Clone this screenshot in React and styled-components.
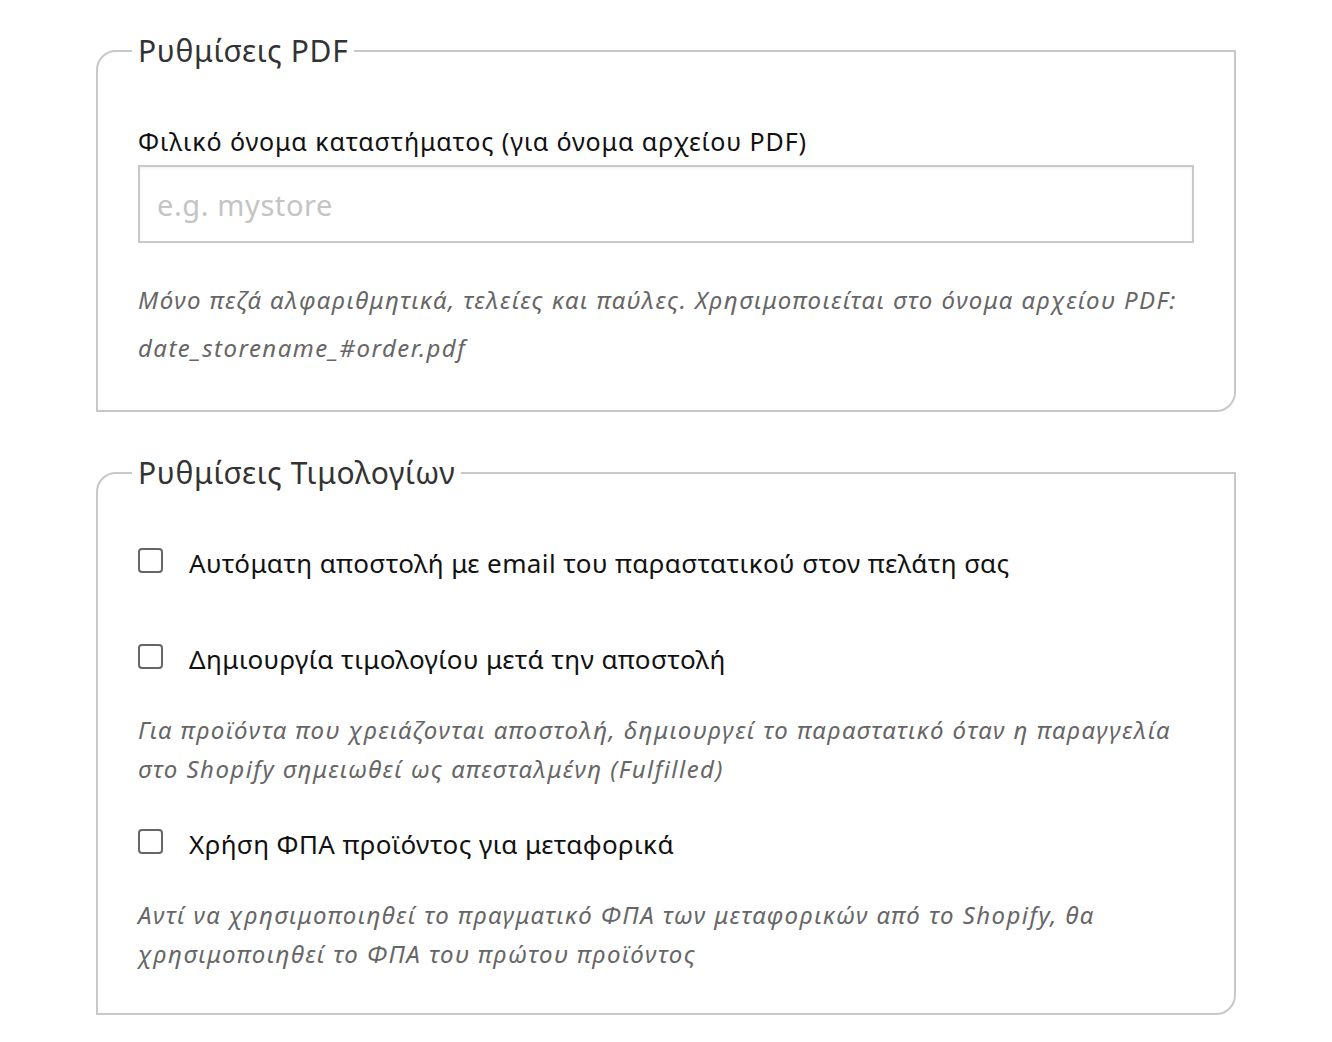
import styled, { createGlobalStyle } from 'styled-components';

const GlobalStyle = createGlobalStyle`
  body {
    margin: 0;
    background: #fff;
    font-family: "Noto Sans", "Open Sans", sans-serif;
    color: #111;
  }
  * { box-sizing: border-box; }
`;

const Page = styled.div`
  padding: 31px 0 40px 96px;
  width: 1236px;
`;

const Fieldset = styled.fieldset`
  margin: ${props => props.$gap || 0}px 0 0 0;
  width: 1140px;
  border: 2px solid #c8c8c8;
  border-radius: 20px 0 20px 0;
  padding: 0 40px ${props => props.$pb || 38}px;
  min-width: 0;
`;

const Legend = styled.legend`
  font-size: 30px;
  line-height: 40px;
  letter-spacing: 0.7px;
  padding: 0 6px;
  margin-left: -6px;
  color: #333;
`;

const Label = styled.label`
  display: block;
  margin-top: 54px;
  font-size: 25px;
  line-height: 32px;
  letter-spacing: 0.9px;
  color: #111;
`;

const Input = styled.input`
  display: block;
  width: 100%;
  height: 78px;
  margin-top: 8px;
  border: 2px solid #c8c8c8;
  box-shadow: inset 0 1px 3px rgba(0, 0, 0, 0.06);
  padding: 0 17px;
  font-family: inherit;
  font-size: 29px;
  letter-spacing: 0.6px;
  color: #333;
  outline: none;
  &::placeholder { color: #c4c4c4; }
`;

const Hint = styled.p`
  margin: ${props => props.$top}px 0 0;
  font-style: italic;
  font-size: 24px;
  letter-spacing: 1.45px;
  line-height: ${props => props.$lh}px;
  color: #666;
`;

const CheckRow = styled.label`
  display: flex;
  align-items: center;
  gap: 26px;
  margin-top: ${props => props.$top}px;
  font-size: 26px;
  line-height: 40px;
  letter-spacing: 0.4px;
  color: #111;
  cursor: pointer;
`;

const Box = styled.input.attrs({ type: 'checkbox' })`
  appearance: none;
  flex: none;
  width: 25px;
  height: 25px;
  margin: -5px 0 0;
  border: 2px solid #666;
  border-radius: 4px;
  background: #fff;
`;

export default function App() {
  return (
    <>
      <GlobalStyle />
      <Page>
        <Fieldset>
          <Legend>Ρυθμίσεις PDF</Legend>
          <Label htmlFor="storename">Φιλικό όνομα καταστήματος (για όνομα αρχείου PDF)</Label>
          <Input id="storename" placeholder="e.g. mystore" />
          <Hint $top={33} $lh={48}>
            Μόνο πεζά αλφαριθμητικά, τελείες και παύλες. Χρησιμοποιείται στο όνομα αρχείου PDF:
            date_storename_#order.pdf
          </Hint>
        </Fieldset>

        <Fieldset $gap={41} $pb={40}>
          <Legend>Ρυθμίσεις Τιμολογίων</Legend>
          <CheckRow $top={50}>
            <Box />
            Αυτόματη αποστολή με email του παραστατικού στον πελάτη σας
          </CheckRow>
          <CheckRow $top={56}>
            <Box />
            Δημιουργία τιμολογίου μετά την αποστολή
          </CheckRow>
          <Hint $top={31} $lh={39}>
            Για προϊόντα που χρειάζονται αποστολή, δημιουργεί το παραστατικό όταν η παραγγελία
            στο Shopify σημειωθεί ως απεσταλμένη (Fulfilled)
          </Hint>
          <CheckRow $top={36}>
            <Box />
            Χρήση ΦΠΑ προϊόντος για μεταφορικά
          </CheckRow>
          <Hint $top={31} $lh={39}>
            Αντί να χρησιμοποιηθεί το πραγματικό ΦΠΑ των μεταφορικών από το Shopify, θα
            χρησιμοποιηθεί το ΦΠΑ του πρώτου προϊόντος
          </Hint>
        </Fieldset>
      </Page>
    </>
  );
}
